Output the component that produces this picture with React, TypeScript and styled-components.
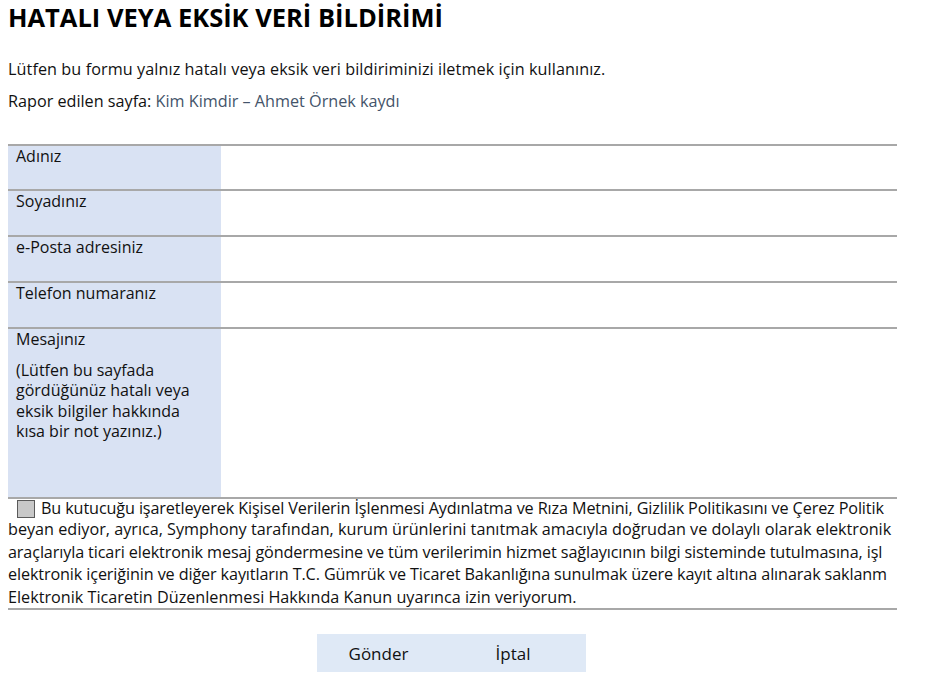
import React from "react";
import styled, { createGlobalStyle } from "styled-components";

const Global = createGlobalStyle`
  html, body { margin: 0; padding: 0; background: #fff; }
  body { font-family: "Open Sans", Lato, sans-serif; color: #111; }
`;

const Page = styled.div`
  padding: 0 28px 0 8px;
  width: 889px;
`;

const Title = styled.h1`
  margin: 0;
  padding-top: 1px;
  font-size: 25.5px;
  line-height: 32px;
  font-weight: 700;
  letter-spacing: 0;
  color: #000;
`;

const Para = styled.p`
  margin: 0;
  font-size: 16.2px;
  line-height: 20px;
`;

const Intro = styled(Para)`
  margin-top: 26px;
  letter-spacing: 0.08px;
`;

const Source = styled(Para)`
  margin-top: 12px;
`;

const Link = styled.span`
  color: #44546a;
`;

const Table = styled.div`
  margin-top: 33px;
  display: grid;
  grid-template-columns: 213px 1fr;
  border-bottom: 2px solid #a8a8a8;
`;

const Label = styled.div<{ $h: number }>`
  background: #d9e2f3;
  border-top: 2px solid #a8a8a8;
  height: ${(p) => p.$h}px;
  box-sizing: border-box;
  padding: 0 8px;
  font-size: 16px;
  line-height: 20px;
`;

const Field = styled.div`
  border-top: 2px solid #a8a8a8;
`;

const Hint = styled.div`
  margin-top: 11px;
  line-height: 20.4px;
`;

const Consent = styled.div`
  border-bottom: 2px solid #a8a8a8;
`;

const Line = styled.div<{ $first?: boolean; $tight?: boolean }>`
  white-space: nowrap;
  font-size: 16.2px;
  line-height: ${(p) => (p.$first ? "19.4px" : "22.4px")};
  display: flex;
  align-items: center;
  letter-spacing: ${(p) => (p.$tight ? "-0.12px" : "0")};
`;

const Box = styled.span`
  display: inline-block;
  width: 16px;
  height: 16px;
  margin: 0 6px 0 9px;
  background: #c8c8c8;
  border: 1px solid #5a5a5a;
  flex: none;
`;

const Actions = styled.div`
  margin: 24px 0 0 309px;
  width: 269px;
  height: 38px;
  background: #dfe9f6;
  display: flex;
  align-items: center;
`;

const Action = styled.span<{ $w: number }>`
  width: ${(p) => p.$w}px;
  text-align: center;
  font-size: 17px;
  color: #111;
`;

const rows = [
  { label: "Adınız", h: 45 },
  { label: "Soyadınız", h: 46 },
  { label: "e-Posta adresiniz", h: 46 },
  { label: "Telefon numaranız", h: 46 },
];

export default function App() {
  return (
    <>
      <Global />
      <Page>
        <Title>HATALI VEYA EKSİK VERİ BİLDİRİMİ</Title>
        <Intro>
          Lütfen bu formu yalnız hatalı veya eksik veri bildiriminizi iletmek için kullanınız.
        </Intro>
        <Source>
          Rapor edilen sayfa: <Link>Kim Kimdir – Ahmet Örnek kaydı</Link>
        </Source>
        <Table>
          {rows.map((r) => (
            <React.Fragment key={r.label}>
              <Label $h={r.h}>{r.label}</Label>
              <Field />
            </React.Fragment>
          ))}
          <Label $h={170}>
            Mesajınız
            <Hint>
              (Lütfen bu sayfada
              <br />
              gördüğünüz hatalı veya
              <br />
              eksik bilgiler hakkında
              <br />
              kısa bir not yazınız.)
            </Hint>
          </Label>
          <Field />
        </Table>
        <Consent>
          <Line $first $tight>
            <Box />
            Bu kutucuğu işaretleyerek Kişisel Verilerin İşlenmesi Aydınlatma ve Rıza Metnini, Gizlilik Politikasını ve Çerez Politik
          </Line>
          <Line>
            beyan ediyor, ayrıca, Symphony tarafından, kurum ürünlerini tanıtmak amacıyla doğrudan ve dolaylı olarak elektronik
          </Line>
          <Line $tight>
            araçlarıyla ticari elektronik mesaj göndermesine ve tüm verilerimin hizmet sağlayıcının bilgi sisteminde tutulmasına, işl
          </Line>
          <Line $tight>
            elektronik içeriğinin ve diğer kayıtların T.C. Gümrük ve Ticaret Bakanlığına sunulmak üzere kayıt altına alınarak saklanm
          </Line>
          <Line>Elektronik Ticaretin Düzenlenmesi Hakkında Kanun uyarınca izin veriyorum.</Line>
        </Consent>
        <Actions>
          <Action $w={123}>Gönder</Action>
          <Action $w={146}>İptal</Action>
        </Actions>
      </Page>
    </>
  );
}
